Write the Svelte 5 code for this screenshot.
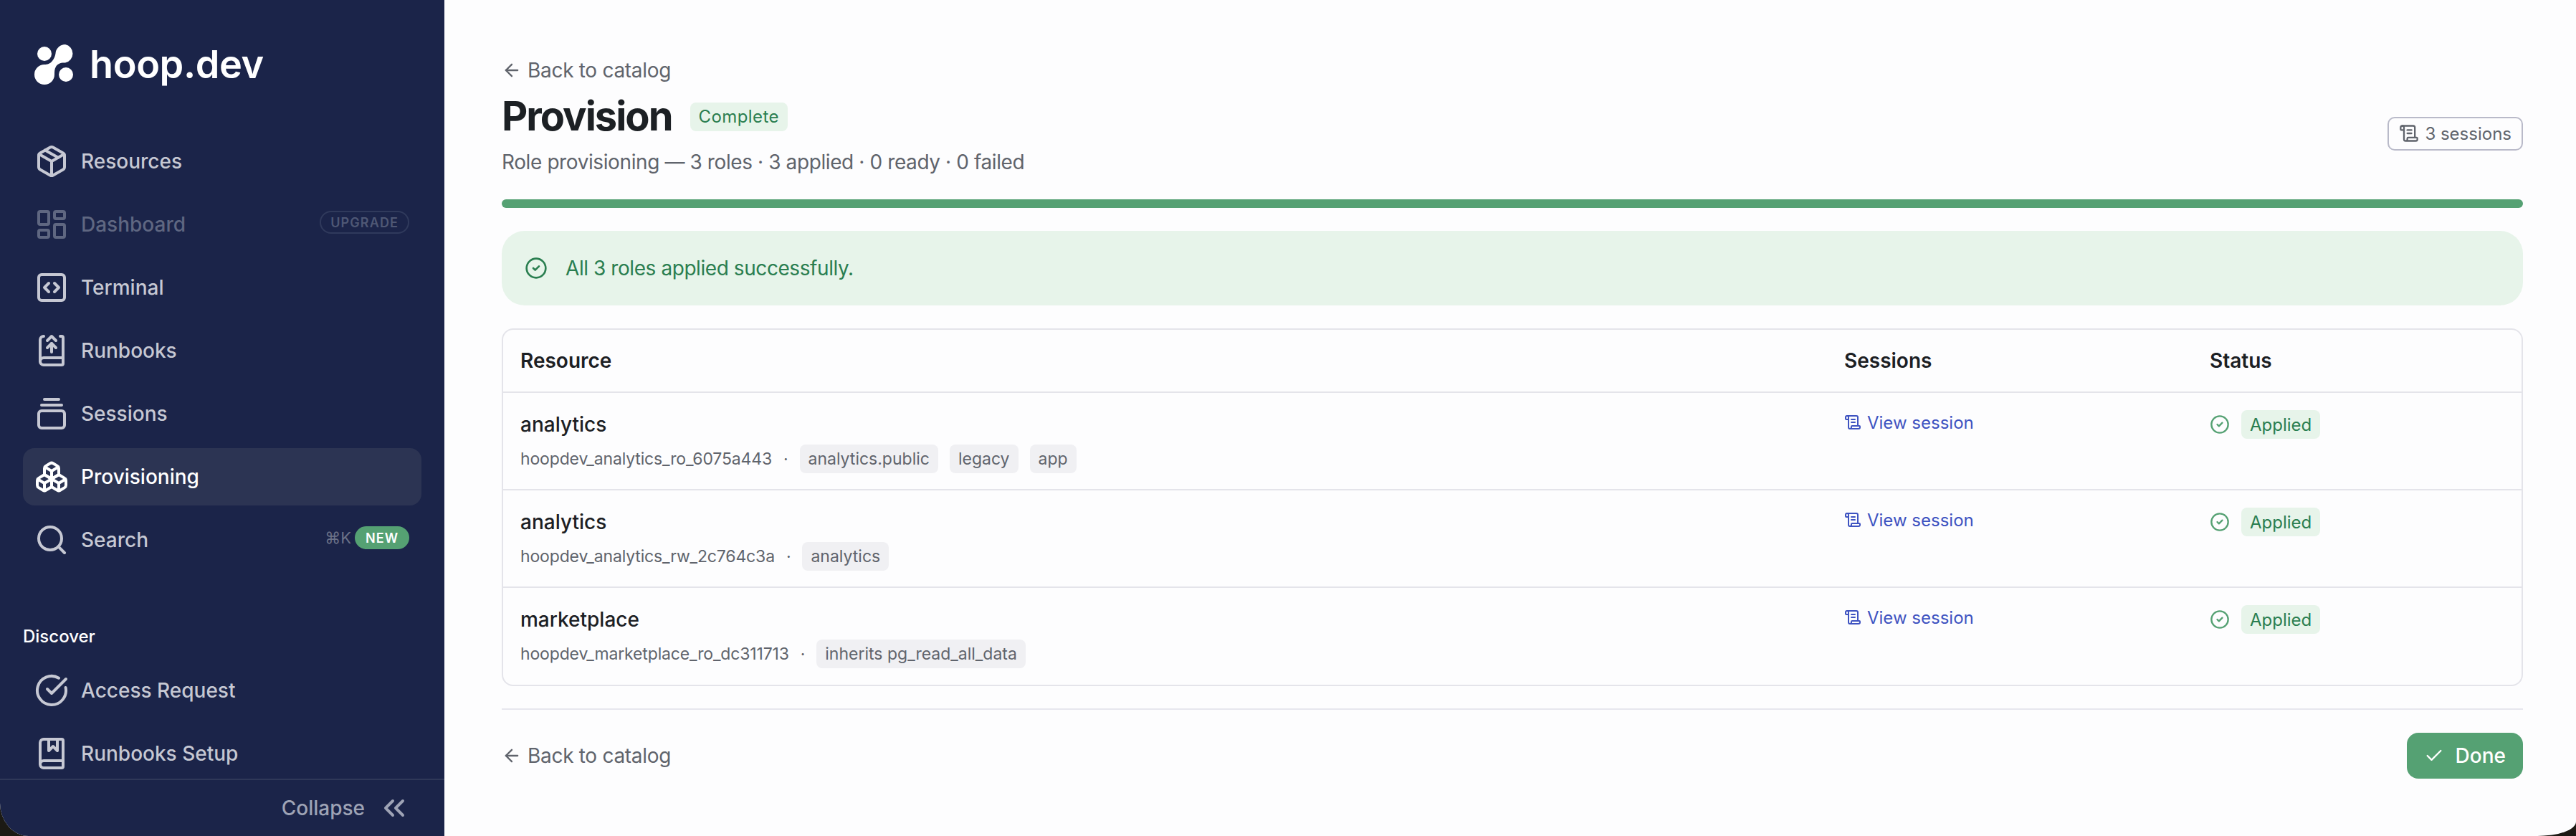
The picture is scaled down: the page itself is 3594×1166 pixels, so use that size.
<script>
  const icons = {
    package: '<path d="M11 21.73a2 2 0 0 0 2 0l7-4A2 2 0 0 0 21 16V8a2 2 0 0 0-1-1.73l-7-4a2 2 0 0 0-2 0l-7 4A2 2 0 0 0 3 8v8a2 2 0 0 0 1 1.73z"/><path d="M12 22V12"/><polyline points="3.29 7 12 12 20.71 7"/><path d="m7.5 4.27 9 5.15"/>',
    dashboard: '<rect width="7" height="9" x="3" y="3" rx="1"/><rect width="7" height="5" x="14" y="3" rx="1"/><rect width="7" height="9" x="14" y="12" rx="1"/><rect width="7" height="5" x="3" y="16" rx="1"/>',
    terminal: '<path d="m10 9-3 3 3 3"/><path d="m14 15 3-3-3-3"/><rect x="3" y="3" width="18" height="18" rx="2"/>',
    bookUp: '<path d="M12 13V7"/><path d="M18 2h1a1 1 0 0 1 1 1v18a1 1 0 0 1-1 1H6.5a1 1 0 0 1 0-5H20"/><path d="M4 19.5v-15A2.5 2.5 0 0 1 6.5 2"/><path d="m9 10 3-3 3 3"/><path d="m9 5 3-3 3 3"/>',
    sessions: '<path d="M7 2h10"/><path d="M5 6h14"/><rect width="18" height="12" x="3" y="10" rx="2"/>',
    boxes: '<path d="M2.97 12.92A2 2 0 0 0 2 14.63v3.24a2 2 0 0 0 .97 1.71l3 1.8a2 2 0 0 0 2.06 0L12 19v-5.5l-5-3-4.03 2.42Z"/><path d="m7 16.5-4.74-2.85"/><path d="m7 16.5 5-3"/><path d="M7 16.5v5.17"/><path d="M12 13.5V19l3.97 2.38a2 2 0 0 0 2.06 0l3-1.8a2 2 0 0 0 .97-1.71v-3.24a2 2 0 0 0-.97-1.71L17 10.5l-5 3Z"/><path d="m17 16.5-5-3"/><path d="m17 16.5 4.74-2.85"/><path d="M17 16.5v5.17"/><path d="M7.97 4.42A2 2 0 0 0 7 6.13v4.37l5 3 5-3V6.13a2 2 0 0 0-.97-1.71l-3-1.8a2 2 0 0 0-2.06 0l-3 1.8Z"/><path d="M12 8 7.26 5.15"/><path d="m12 8 4.74-2.85"/><path d="M12 13.5V8"/>',
    search: '<path d="m21 21-4.3-4.3"/><circle cx="11" cy="11" r="8"/>',
    access: '<path d="M21.801 10A10 10 0 1 1 17 3.335"/><path d="m9 11 3 3L22 4"/>',
    bookMarked: '<path d="M10 2v8l3-3 3 3V2"/><path d="M4 19.5v-15A2.5 2.5 0 0 1 6.5 2H19a1 1 0 0 1 1 1v18a1 1 0 0 1-1 1H6.5a1 1 0 0 1 0-5H20"/>',
    chevrons: '<path d="m11 17-5-5 5-5"/><path d="m18 17-5-5 5-5"/>',
    scroll: '<path d="M15 12h-5"/><path d="M15 8h-5"/><path d="M19 17V5a2 2 0 0 0-2-2H4"/><path d="M8 21h12a2 2 0 0 0 2-2v-1a1 1 0 0 0-1-1H11a1 1 0 0 0-1 1v1a2 2 0 1 1-4 0V5a2 2 0 1 0-4 0v2a1 1 0 0 0 1 1h3"/>',
    circleCheck: '<circle cx="12" cy="12" r="10"/><path d="m9 12 2 2 4-4"/>',
    arrowLeft: '<path d="m12 19-7-7 7-7"/><path d="M19 12H5"/>',
    check: '<path d="M20 6 9 17l-5-5"/>'
  };

  const mainNav = [
    { label: "Resources", icon: "package" },
    { label: "Dashboard", icon: "dashboard", disabled: true, upgrade: true },
    { label: "Terminal", icon: "terminal" },
    { label: "Runbooks", icon: "bookUp" },
    { label: "Sessions", icon: "sessions" },
    { label: "Provisioning", icon: "boxes", active: true },
    { label: "Search", icon: "search", shortcut: true }
  ];

  const discoverNav = [
    { label: "Access Request", icon: "access" },
    { label: "Runbooks Setup", icon: "bookMarked" }
  ];

  const rows = [
    { name: "analytics", role: "hoopdev_analytics_ro_6075a443", tags: ["analytics.public", "legacy", "app"] },
    { name: "analytics", role: "hoopdev_analytics_rw_2c764c3a", tags: ["analytics"] },
    { name: "marketplace", role: "hoopdev_marketplace_ro_dc311713", tags: ["inherits pg_read_all_data"] }
  ];
</script>

{#snippet icon(name, size)}
  <svg class="icon" width={size} height={size} viewBox="0 0 24 24" fill="none" stroke="currentColor" stroke-width="2" stroke-linecap="round" stroke-linejoin="round" aria-hidden="true">
    {@html icons[name]}
  </svg>
{/snippet}

{#snippet navItem(item)}
  <a class="nav-item" class:active={item.active} class:disabled={item.disabled} href="#top">
    {@render icon(item.icon, 48)}
    <span class="nav-label">{item.label}</span>
    {#if item.upgrade}
      <span class="upgrade">UPGRADE</span>
    {/if}
    {#if item.shortcut}
      <span class="shortcut">⌘K</span>
      <span class="new">NEW</span>
    {/if}
  </a>
{/snippet}

<div class="window">
  <aside class="sidebar">
    <div class="brand">
      <svg class="logo" width="57" height="57" viewBox="0 0 57 57" fill="#fff" aria-hidden="true">
        <circle cx="14" cy="13" r="10" />
        <circle cx="44" cy="42" r="10" />
        <path d="M43 0A13 13 0 0 1 43 25.5C37 25 32 27 30 31C28 34 28 38 28 42A14 14 0 1 1 14 28C18 28 22 27 25 23C28 19 29 16 29.5 12.5A13.5 13 0 0 1 43 0Z" />
      </svg>
      <span class="wordmark">hoop.dev</span>
    </div>

    <nav class="nav">
      {#each mainNav as item}
        {@render navItem(item)}
      {/each}
    </nav>

    <div class="section-title">Discover</div>
    <nav class="nav">
      {#each discoverNav as item}
        {@render navItem(item)}
      {/each}
    </nav>

    <div class="collapse">
      <span>Collapse</span>
      {@render icon("chevrons", 48)}
    </div>
  </aside>

  <main class="content">
    <a class="back" href="#top">
      {@render icon("arrowLeft", 28)}
      Back to catalog
    </a>

    <header class="page-head">
      <div>
        <div class="title-row">
          <h1>Provision</h1>
          <span class="badge head-badge">Complete</span>
        </div>
        <p class="subtitle">Role provisioning — 3 roles · 3 applied · 0 ready · 0 failed</p>
      </div>
      <button class="sessions-btn" type="button">
        {@render icon("scroll", 28)}
        3 sessions
      </button>
    </header>

    <div class="progress"></div>

    <div class="alert">
      {@render icon("circleCheck", 32)}
      All 3 roles applied successfully.
    </div>

    <div class="table-wrap">
      <table>
        <colgroup>
          <col class="col-resource" />
          <col class="col-sessions" />
          <col />
        </colgroup>
        <thead>
          <tr>
            <th>Resource</th>
            <th>Sessions</th>
            <th>Status</th>
          </tr>
        </thead>
        <tbody>
          {#each rows as row}
            <tr>
              <td>
                <div class="name">{row.name}</div>
                <div class="meta">
                  <span class="role">{row.role}</span>
                  <span class="dot">·</span>
                  {#each row.tags as tag}
                    <span class="tag">{tag}</span>
                  {/each}
                </div>
              </td>
              <td>
                <a class="session-link" href="#top">
                  {@render icon("scroll", 24)}
                  View session
                </a>
              </td>
              <td>
                <div class="status">
                  {@render icon("circleCheck", 28)}
                  <span class="badge">Applied</span>
                </div>
              </td>
            </tr>
          {/each}
        </tbody>
      </table>
    </div>

    <footer class="page-foot">
      <a class="back" href="#top">
        {@render icon("arrowLeft", 28)}
        Back to catalog
      </a>
      <button class="done" type="button">
        {@render icon("check", 28)}
        Done
      </button>
    </footer>
  </main>
</div>

<style>
  :global(body) {
    background: #1c1a14;
    font-family: Inter, "Noto Sans", sans-serif;
  }

  a {
    color: inherit;
    text-decoration: none;
  }

  button {
    font: inherit;
    cursor: pointer;
  }

  .icon {
    flex: none;
    display: block;
  }

  .window {
    display: flex;
    height: 1166px;
    overflow: hidden;
    background: #fdfdfe;
    border-bottom-left-radius: 40px 46px;
    border-bottom-right-radius: 54px 20px;
  }

  /* Sidebar */
  .sidebar {
    flex: none;
    width: 620px;
    display: flex;
    flex-direction: column;
    background: #1b2449;
    color: #c6c8d3;
  }

  .brand {
    flex: none;
    height: 185px;
    padding: 62px 0 0 48px;
    box-sizing: border-box;
    display: flex;
    align-items: flex-start;
    gap: 20px;
  }

  .wordmark {
    color: #fff;
    font-size: 54px;
    font-weight: 600;
    line-height: 56px;
    letter-spacing: -0.4px;
  }

  .nav {
    flex: none;
    display: flex;
    flex-direction: column;
    gap: 8px;
    padding: 0 32px;
  }

  .nav-item {
    height: 80px;
    display: flex;
    align-items: center;
    gap: 17px;
    padding: 0 17px 0 16px;
    border-radius: 16px;
    font-size: 28px;
    font-weight: 500;
  }

  .nav-label {
    flex: 1;
  }

  .nav-item.active {
    background: #2c3453;
    color: #fff;
  }

  .nav-item.disabled {
    color: #5f6781;
  }

  .upgrade {
    height: 32px;
    box-sizing: border-box;
    display: flex;
    align-items: center;
    padding: 0 13px;
    border: 2px solid #303a5c;
    border-radius: 16px;
    color: #4f5875;
    font-size: 18px;
    font-weight: 600;
    letter-spacing: 1.1px;
    margin-top: -6px;
  }

  .shortcut {
    color: #6b7288;
    font-size: 22px;
    font-weight: 400;
    margin-top: -6px;
  }

  .new {
    height: 32px;
    display: flex;
    align-items: center;
    padding: 0 15px;
    border-radius: 16px;
    background: #55a173;
    color: #fff;
    font-size: 18px;
    font-weight: 600;
    letter-spacing: 1px;
    margin: -6px 0 0 -12px;
  }

  .section-title {
    flex: none;
    margin: 77px 0 17px 32px;
    height: 36px;
    line-height: 36px;
    color: #fff;
    font-size: 24px;
    font-weight: 500;
  }

  /* the footer sits over the bottom edge of the last nav row */
  .collapse {
    flex: none;
    margin-top: -5px;
    height: 78px;
    border-top: 2px solid #2f3858;
    display: flex;
    align-items: center;
    justify-content: flex-end;
    gap: 4px;
    padding-right: 46px;
    color: #9ea3b5;
    font-size: 28px;
    font-weight: 500;
  }

  .collapse span {
    margin-right: 13px;
  }

  /* Main column */
  .content {
    flex: 1;
    min-width: 0;
    display: flex;
    flex-direction: column;
    padding: 78px 74px 0 80px;
    color: #1c2024;
    font-size: 28px;
  }

  .back {
    display: flex;
    align-items: center;
    gap: 8px;
    height: 40px;
    color: #60646c;
    letter-spacing: -0.3px;
  }

  .page-head {
    display: flex;
    align-items: center;
    justify-content: space-between;
    margin-top: 12px;
  }

  .title-row {
    display: flex;
    align-items: center;
    gap: 25px;
  }

  h1 {
    margin: 0;
    font-size: 56px;
    line-height: 65px;
    font-weight: 700;
    letter-spacing: -2px;
  }

  .badge {
    height: 40px;
    display: inline-flex;
    align-items: center;
    padding: 0 12px;
    border-radius: 8px;
    background: #e7f4ea;
    color: #2a7e50;
    font-size: 24px;
    font-weight: 400;
  }

  .head-badge {
    letter-spacing: 0.4px;
  }

  .subtitle {
    margin: 11px 0 0;
    line-height: 40px;
    color: #60646c;
    letter-spacing: -0.4px;
  }

  .sessions-btn {
    display: flex;
    align-items: center;
    gap: 8px;
    height: 47px;
    padding: 0 14px;
    margin-bottom: 4px;
    background: transparent;
    border: 2px solid #b9bac9;
    border-radius: 10px;
    color: #60646c;
    font-size: 24px;
  }

  .progress {
    margin-top: 32px;
    height: 12px;
    border-radius: 6px;
    background: #55a173;
  }

  .alert {
    margin-top: 32px;
    height: 104px;
    display: flex;
    align-items: center;
    gap: 25px;
    padding-left: 32px;
    border-radius: 32px;
    background: #e7f4ea;
    color: #2a7e50;
    letter-spacing: -0.43px;
  }

  .table-wrap {
    margin-top: 32px;
    border: 2px solid #e4e4ea;
    border-radius: 16px;
    overflow: hidden;
  }

  table {
    width: 100%;
    border-collapse: collapse;
    table-layout: fixed;
  }

  .col-resource {
    width: 1847px;
  }

  .col-sessions {
    width: 510px;
  }

  th {
    height: 86px;
    padding: 0 24px;
    text-align: left;
    font-weight: 600;
  }

  td {
    height: 136px;
    padding: 24px 24px 0;
    box-sizing: border-box;
    vertical-align: top;
    border-top: 2px solid #e4e4ea;
  }

  .name {
    line-height: 40px;
    font-weight: 500;
  }

  .meta {
    margin-top: 8px;
    display: flex;
    align-items: center;
    gap: 16px;
    font-size: 23px;
    letter-spacing: -0.15px;
    color: #60646c;
  }

  .tag {
    height: 40px;
    display: flex;
    align-items: center;
    padding: 0 12px;
    border-radius: 8px;
    background: #f0f0f3;
    letter-spacing: 0;
  }

  .session-link {
    display: flex;
    align-items: center;
    gap: 8px;
    height: 34px;
    color: #3e53c1;
    font-size: 24px;
  }

  .status {
    display: flex;
    align-items: center;
    gap: 16px;
    color: #55a173;
  }

  .page-foot {
    margin-top: 31px;
    padding-top: 32px;
    border-top: 2px solid #e6e6ee;
    display: flex;
    align-items: center;
    justify-content: space-between;
  }

  .done {
    display: flex;
    align-items: center;
    gap: 16px;
    height: 64px;
    padding: 0 24px;
    border: none;
    border-radius: 16px;
    background: #55a173;
    color: #fff;
    font-weight: 500;
  }
</style>
